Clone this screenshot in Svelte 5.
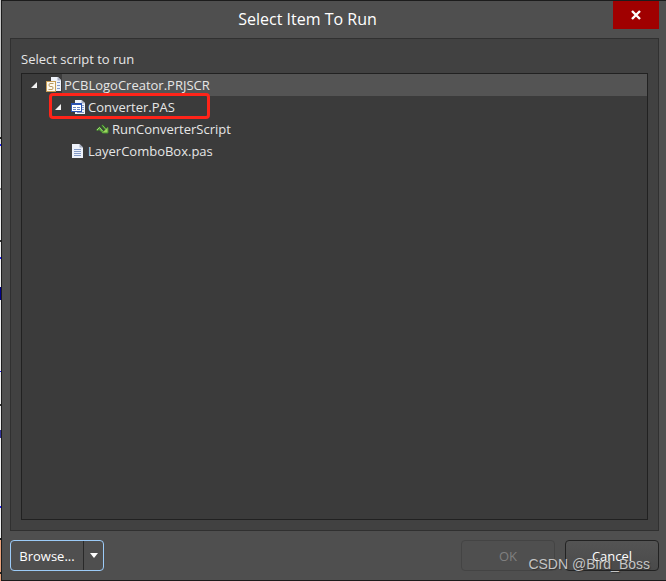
<script lang="ts">
	type Item = {
		name: string;
		level: number;
		icon: 'project' | 'form' | 'procedure' | 'document';
		expanded?: boolean;
		marked?: boolean;
	};

	const items: Item[] = [
		{ name: 'PCBLogoCreator.PRJSCR', level: 0, icon: 'project', expanded: true },
		{ name: 'Converter.PAS', level: 1, icon: 'form', expanded: true, marked: true },
		{ name: 'RunConverterScript', level: 2, icon: 'procedure' },
		{ name: 'LayerComboBox.pas', level: 1, icon: 'document' }
	];

	let selected = $state(0);
</script>

<div class="screen">
	<div class="backdrop"></div>
	<main class="dialog">
		<header class="titlebar">
			<h1>Select Item To Run</h1>
			<button class="close" aria-label="Close">
				<svg width="10" height="10" viewBox="0 0 10 10">
					<path d="M1 1L9 9M9 1L1 9" stroke="#fff" stroke-width="2.4" />
				</svg>
			</button>
		</header>

		<section class="group">
			<div class="caption" id="script-label">Select script to run</div>
			<div class="tree" role="tree" aria-labelledby="script-label">
				{#each items as item, i}
					<div
						class="row level-{item.level}"
						class:selected={selected === i}
						role="treeitem"
						aria-selected={selected === i}
						aria-expanded={item.expanded}
						tabindex="-1"
						onclick={() => (selected = i)}
						onkeydown={(e) => e.key === 'Enter' && (selected = i)}
					>
						<span class="toggle">
							{#if item.expanded}
								<svg width="6" height="6" viewBox="0 0 6 6"><path d="M6 0V6H0Z" fill="#f2f2f2" /></svg>
							{/if}
						</span>
						<span class="icon">
							{#if item.icon === 'project'}
								<svg width="17" height="16" viewBox="0 0 17 16">
									<path d="M6 0H13L16 3V14H6Z" fill="#eef2fa" />
									<path d="M12.5 0V3.5H16Z" fill="#a3abc0" />
									<path d="M12 5.5H15M12 8.5H15M12 11.5H15" stroke="#8299c6" />
									<rect x="1.5" y="4.5" width="9" height="10" fill="#fdf8ec" stroke="#c69d55" />
									<path d="M8.5 6.5H5Q4 6.5 4 8T5 9.5H7Q8 9.5 8 11T7 12.5H3.5" fill="none" stroke="#b99a62" />
								</svg>
							{:else if item.icon === 'form'}
								<svg width="17" height="16" viewBox="0 0 17 16">
									<path d="M6 1H12.5L16 4V15H6Z" fill="#eef2fa" />
									<path d="M12.5 1V4.5H16Z" fill="#a3abc0" />
									<path d="M13 6.5H15M13 8.5H15M13 10.5H15M8 13.5H15" stroke="#8299c6" />
									<rect x="2.5" y="4.5" width="10" height="8" fill="#fff" stroke="#2b54b4" />
									<path d="M2 5H13" stroke="#2b54b4" stroke-width="2" />
									<path d="M4 8.5H7M8 8.5H11M4 10.5H7M8 10.5H11" stroke="#6784c6" />
								</svg>
							{:else if item.icon === 'procedure'}
								<svg width="17" height="16" viewBox="0 0 17 16">
									<path d="M3 9L6.5 5.5L11 10.5L9.5 12L6 9L4.5 10Z" fill="#4f9b35" />
									<path d="M4 9L6.5 6.5L9.5 10" fill="none" stroke="#9cd974" />
									<path d="M9 4L14 10" stroke="#367326" stroke-width="2.4" />
									<path d="M9.5 4.5L13 8.5" stroke="#83c65b" />
									<path d="M15 6V12H9Z" fill="#99d55b" />
									<path d="M9.5 12H15V6.5" fill="none" stroke="#478d32" />
								</svg>
							{:else}
								<svg width="17" height="16" viewBox="0 0 17 16">
									<path d="M3 1H10.5L14 4.5V15H3Z" fill="#eef2fa" />
									<path d="M10.5 1V4.5H14Z" fill="#a3abc0" />
									<path d="M5 6.5H12M5 8.5H12M5 10.5H12M5 12.5H12" stroke="#8299c6" />
								</svg>
							{/if}
						</span>
						<span class="name">{item.name}</span>
						{#if item.marked}<span class="marker"></span>{/if}
					</div>
				{/each}
			</div>
		</section>

		<footer class="actions">
			<div class="split">
				<button class="browse">Browse...</button>
				<button class="more" aria-label="More browse options">
					<svg width="8" height="5" viewBox="0 0 8 5"><path d="M0 0H8L4 5Z" fill="#fff" /></svg>
				</button>
			</div>
			<button class="button" disabled>OK</button>
			<button class="button">Cancel</button>
		</footer>
	</main>
	<div class="watermark">CSDN @Bird_Boss</div>
</div>

<style>
	:global(body) {
		margin: 0;
	}

	.screen {
		position: relative;
		display: flex;
		min-height: 100vh;
		font-family: 'Open Sans', 'Noto Sans', sans-serif;
		font-size: 13px;
		color: #e6e6e6;
	}

	.backdrop {
		width: 1px;
		background: linear-gradient(
			#c8c8c8 0 137px, #222 137px 139px, #ddd 139px 144px, #22f 144px 146px,
			#eee 146px 188px, #888 188px 190px, #eee 190px 240px, #333 240px 242px,
			#eee 242px 257px, #22f 257px 259px, #eee 259px 287px, #008 287px 300px,
			#eee 300px 371px, #22f 371px 372px, #eee 372px 404px, #333 404px 406px,
			#eee 406px 430px, #339 430px 438px, #eee 438px 506px, #22f 506px 508px,
			#eee 508px 538px, #222 538px 540px, #e8a27c 540px 572px, #222 572px 574px, #e8a27c 574px
		);
	}

	.dialog {
		flex: 1;
		display: flex;
		flex-direction: column;
		box-sizing: border-box;
		padding: 0 7px 9px 8px;
		border: 1px solid #1c1c1c;
		border-right: 0;
		background: #4f4f4f;
	}

	.titlebar {
		display: flex;
		align-items: flex-start;
		height: 37px;
	}

	h1 {
		flex: 1;
		margin: 0;
		padding-right: 8px;
		font-size: 16px;
		font-weight: 400;
		line-height: 37px;
		text-align: center;
		color: #fff;
	}

	button {
		padding: 0;
		font: inherit;
		color: #fff;
	}

	.close {
		display: flex;
		align-items: center;
		justify-content: center;
		width: 46px;
		height: 28px;
		border: 0;
		background: #a00000;
	}

	.group {
		flex: 1;
		display: flex;
		flex-direction: column;
		padding: 9px 10px 10px;
		border: 1px solid #303030;
		background: #414141;
	}

	.caption {
		padding-bottom: 3px;
		line-height: 22px;
	}

	.tree {
		flex: 1;
		border: 1px solid #212121;
		background: #3b3b3b;
	}

	.row {
		position: relative;
		display: flex;
		align-items: center;
		height: 22px;
		outline: 0;
	}

	.level-1 {
		padding-left: 24px;
	}

	.level-2 {
		padding-left: 48px;
	}

	.toggle {
		display: flex;
		justify-content: center;
		width: 23px;
	}

	.icon {
		display: flex;
		width: 17px;
	}

	.name {
		flex: 1;
		padding-left: 2px;
		line-height: 22px;
	}

	.selected .name {
		background: #545454;
	}

	.marker {
		position: absolute;
		top: -3px;
		left: 27px;
		box-sizing: border-box;
		width: 161px;
		height: 26px;
		border: 3px solid #ff2419;
		border-radius: 4px;
	}

	.actions {
		display: flex;
		gap: 10px;
		padding-top: 9px;
	}

	.split {
		display: flex;
		box-sizing: border-box;
		width: 94px;
		height: 31px;
		margin-right: auto;
		border: 1px solid #9ccbf8;
		border-radius: 4px;
	}

	.split button {
		border: 0;
		background: none;
	}

	.browse {
		flex: 1;
	}

	.split .more {
		display: flex;
		align-items: center;
		justify-content: center;
		width: 20px;
		border-left: 1px solid #292929;
	}

	.button {
		width: 94px;
		height: 31px;
		border: 1px solid #222;
		border-radius: 4px;
		background: linear-gradient(#545454, #4a4a4a);
	}

	.button:disabled {
		border-color: #444;
		background: none;
		color: #808080;
	}

	.watermark {
		position: absolute;
		right: 16px;
		bottom: 7px;
		font-family: 'Liberation Sans', Arial, sans-serif;
		font-size: 14px;
		line-height: 20px;
		color: #c4c4c4;
		text-shadow: 1px 1px 1px #333;
		pointer-events: none;
	}
</style>
